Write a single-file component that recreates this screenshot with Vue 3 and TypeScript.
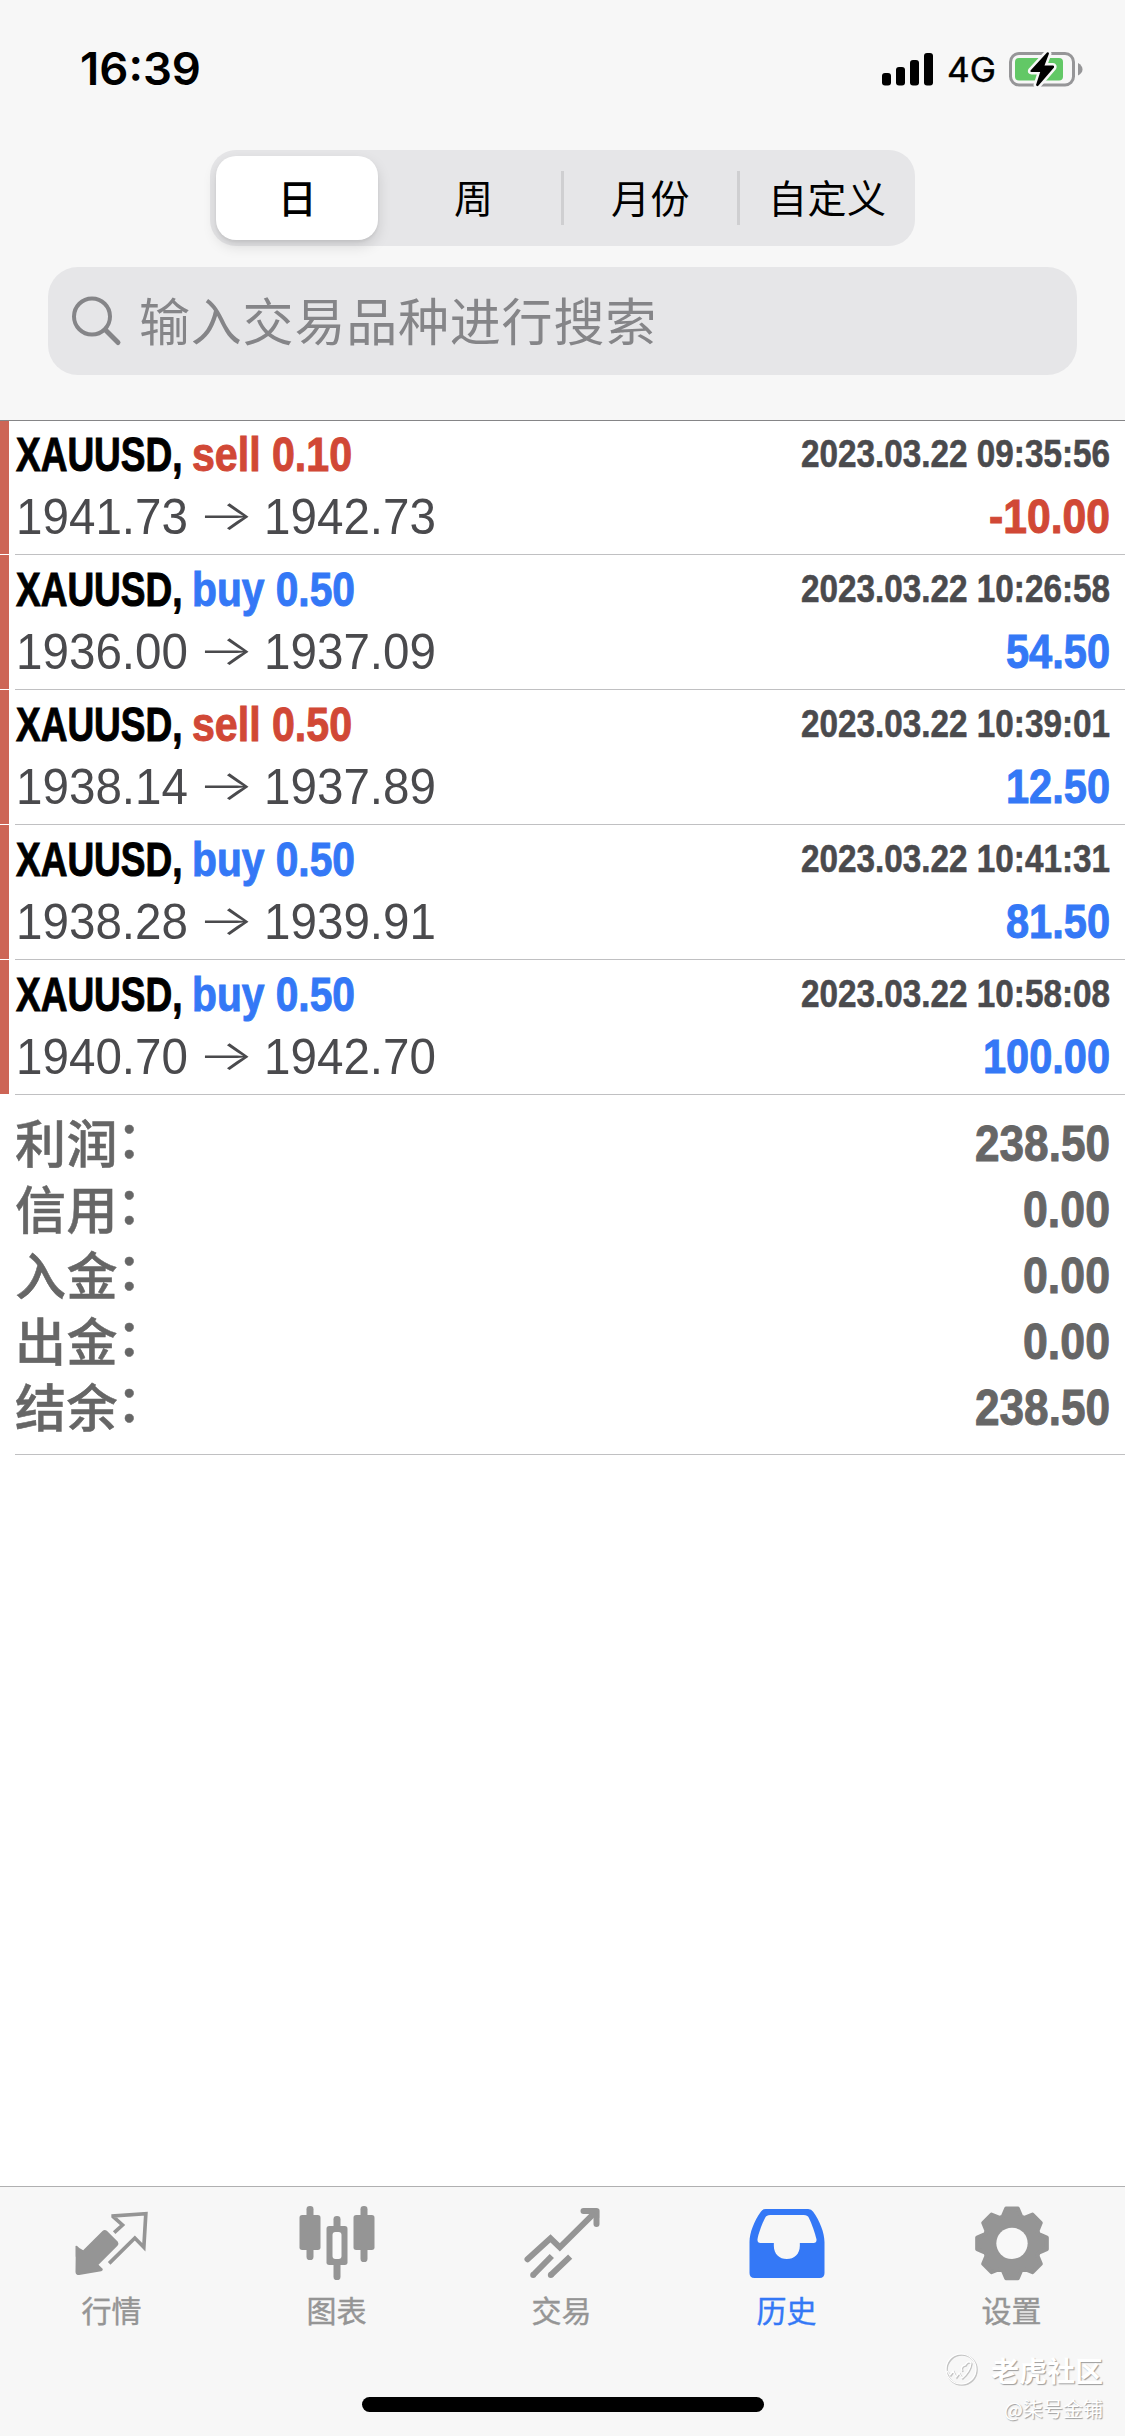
<script setup lang="ts">
import type { Directive } from 'vue'

interface Deal {
  side: 'sell' | 'buy'
  volume: string
  sideWidth: number
  open: string
  close: string
  time: string
  profit: string
  profitWidth: number
}

interface SummaryLine {
  label: string
  value: string
  width: number
}

const periods: string[] = ['日', '周', '月份', '自定义']
const activePeriod = 0

const deals: Deal[] = [
  { side: 'sell', volume: '0.10', sideWidth: 160, open: '1941.73', close: '1942.73', time: '2023.03.22 09:35:56', profit: '-10.00', profitWidth: 121 },
  { side: 'buy', volume: '0.50', sideWidth: 163, open: '1936.00', close: '1937.09', time: '2023.03.22 10:26:58', profit: '54.50', profitWidth: 104 },
  { side: 'sell', volume: '0.50', sideWidth: 160, open: '1938.14', close: '1937.89', time: '2023.03.22 10:39:01', profit: '12.50', profitWidth: 104 },
  { side: 'buy', volume: '0.50', sideWidth: 163, open: '1938.28', close: '1939.91', time: '2023.03.22 10:41:31', profit: '81.50', profitWidth: 104 },
  { side: 'buy', volume: '0.50', sideWidth: 163, open: '1940.70', close: '1942.70', time: '2023.03.22 10:58:08', profit: '100.00', profitWidth: 127 },
]

const summary: SummaryLine[] = [
  { label: '利润', value: '238.50', width: 135 },
  { label: '信用', value: '0.00', width: 87 },
  { label: '入金', value: '0.00', width: 87 },
  { label: '出金', value: '0.00', width: 87 },
  { label: '结余', value: '238.50', width: 135 },
]

// Condenses a text run horizontally so that it takes exactly the given width.
const vFit: Directive<HTMLElement, number> = {
  mounted(el, binding) {
    const natural = el.getBoundingClientRect().width
    el.style.transform = `scaleX(${binding.value / natural})`
    el.style.marginRight = `${binding.value - natural}px`
  },
}

const gearPoints: string = Array.from({ length: 8 }, (_, i) => i * 45)
  .flatMap((a): [number, number][] => [[a - 9.5, 106], [a + 9.5, 106], [a + 19, 85], [a + 26, 85]])
  .map(([deg, r]) => {
    const t = (deg * Math.PI) / 180
    return `${(634.5 + r * Math.sin(t)).toFixed(1)},${(250 - r * Math.cos(t)).toFixed(1)}`
  })
  .join(' ')
</script>

<template>
  <div class="screen">
    <header class="top">
      <div class="status">
        <span v-fit="121" class="clock fit">16:39</span>
        <div class="status-right">
          <svg class="signal" width="51" height="33" viewBox="0 0 51 33">
            <rect x="0" y="20" width="9" height="12.5" rx="3" />
            <rect x="14" y="14" width="9" height="18.5" rx="3" />
            <rect x="28" y="7" width="9" height="25.5" rx="3" />
            <rect x="42" y="0" width="9" height="32.5" rx="3" />
          </svg>
          <span v-fit="49" class="network fit">4G</span>
          <svg class="battery" width="75" height="38" viewBox="0 0 75 38">
            <rect x="1.5" y="3.5" width="63" height="31.5" rx="8.5" fill="none" stroke="#969698" stroke-width="3" />
            <path d="M69 13 Q73.5 15.5 73.5 19.5 Q73.5 23 69 25.5 Z" fill="#969698" />
            <rect x="6" y="8" width="48" height="22.5" rx="4" fill="#62c866" />
            <path d="M38 2.5 L21.5 20.5 Q21 22 22.5 22 H31.2 L27 35 Q28 37 29.5 35.5 L45 17.5 Q45.5 15.5 44 15.5 H35.5 L40 3.5 Q39.5 1.5 38 2.5 Z" fill="#000" stroke="#f7f7f7" stroke-width="5" stroke-linejoin="round" paint-order="stroke" />
          </svg>
        </div>
      </div>

      <div class="segments">
        <div v-for="(p, i) in periods" :key="p" class="segment" :class="{ active: i === activePeriod, divided: i > 1 }">
          <span>{{ p }}</span>
        </div>
      </div>

      <div class="search">
        <svg width="52" height="52" viewBox="0 0 52 52" fill="none" stroke="#858588" stroke-linecap="round">
          <circle cx="21" cy="21.5" r="18" stroke-width="4" />
          <path d="M34.5 35 L47 47.5" stroke-width="5" />
        </svg>
        <span class="placeholder">输入交易品种进行搜索</span>
      </div>
    </header>

    <main class="content">
      <article v-for="(d, i) in deals" :key="i" class="deal">
        <div class="marker"></div>
        <div class="deal-body">
          <div class="line">
            <div class="title">
              <span v-fit="166.5" class="fit">XAUUSD,</span>
              <span v-fit="d.sideWidth" class="fit" :class="d.side">{{ d.side }} {{ d.volume }}</span>
            </div>
            <span v-fit="309" class="fit time">{{ d.time }}</span>
          </div>
          <div class="line second">
            <div class="prices">
              <span v-fit="172" class="fit price">{{ d.open }}</span>
              <span class="arrow">→</span>
              <span v-fit="172" class="fit price">{{ d.close }}</span>
            </div>
            <span v-fit="d.profitWidth" class="fit profit" :class="d.profit.startsWith('-') ? 'sell' : 'buy'">{{ d.profit }}</span>
          </div>
        </div>
      </article>

      <section class="summary">
        <div v-for="s in summary" :key="s.label" class="sum-line">
          <span class="sum-label">{{ s.label }}<span class="colon">：</span></span>
          <span v-fit="s.width" class="fit sum-value">{{ s.value }}</span>
        </div>
      </section>
    </main>

    <nav class="tabs">
      <div class="tab">
        <svg viewBox="220.5 132 234 234">
          <path d="M226 258 L248 271 L306 213 Q312 207 319 212 L352 245 Q356 251 351 257 L294 314 L307 327 Q307 332 302 334 L236 345 Q225 345 225 335 Z M225 258 Q228 255 233 261 L246 272 L225 290 Z" fill="#959595" />
          <path d="M341 218 L366 195 L338 170 V168 L436 161 L430 262 L403 234 L326 310" fill="none" stroke="#959595" stroke-width="11" />
        </svg>
        <span>行情</span>
      </div>
      <div class="tab">
        <svg viewBox="895.5 132 234 234" fill="#959595">
          <rect x="918" y="138" width="21" height="162" rx="10" />
          <rect x="897" y="165" width="63" height="105" rx="8" />
          <rect x="999" y="168" width="21" height="192" rx="10" />
          <rect x="978" y="198" width="63" height="117" rx="8" />
          <rect x="996" y="216" width="27" height="81" rx="9" fill="#fafafa" />
          <rect x="1080" y="138" width="21" height="168" rx="10" />
          <rect x="1059" y="165" width="63" height="105" rx="8" />
        </svg>
        <span>图表</span>
      </div>
      <div class="tab">
        <svg viewBox="310.5 132 234 234" fill="none" stroke="#959595" stroke-width="18">
          <path d="M321 298 L390 235 L418 262 L526 155" stroke-linecap="round" />
          <path d="M489 153 H528 V192" stroke-linecap="round" stroke-linejoin="round" />
          <path d="M510 148 H536 V174 Z" fill="#959595" stroke="none" />
          <circle cx="338" cy="345" r="9" fill="#959595" stroke="none" />
          <circle cx="391" cy="345" r="9" fill="#959595" stroke="none" />
          <path d="M338 345 L394 288 M391 345 L449 290" />
        </svg>
        <span>交易</span>
      </div>
      <div class="tab current">
        <svg viewBox="985.5 132 234 234">
          <path fill-rule="evenodd" fill="#3478f6" d="M1036 147 H1163 Q1173 147 1178 155 C1198 183 1212 218 1212 246 V339 Q1212 354 1197 354 H1002 Q987 354 987 339 V246 C987 218 1001 183 1021 155 Q1026 147 1036 147 Z M1049 165 Q1038 165 1034 173 C1025 191 1014 220 1011 238 Q1010 249 1020 249 H1060 V257 C1060 282 1077 297 1099 297 C1121 297 1138 282 1138 257 V249 H1179 Q1189 249 1188 238 C1184 220 1174 191 1165 173 Q1161 165 1150 165 Z" />
        </svg>
        <span>历史</span>
      </div>
      <div class="tab">
        <svg viewBox="520.5 132 234 234">
          <polygon :points="gearPoints" fill="#959595" stroke="#959595" stroke-width="12" stroke-linejoin="round" />
          <circle cx="634.5" cy="250" r="47" fill="#f8f8f8" />
        </svg>
        <span>设置</span>
      </div>
      <div class="home"></div>
      <div class="watermark">
        <div class="brand">
          <svg width="34" height="34" viewBox="0 0 34 34" fill="none">
            <g stroke="#c4c4c4" transform="translate(1 1)">
              <circle cx="16" cy="16" r="15" stroke-width="1.6" />
              <path d="M2 18 L5 22 L8 18 L11 24 L14 20 L17 25 Q25 18 26 10 Q23 7 20 12 Q15 13 17 18" stroke-width="1.5" />
            </g>
            <g stroke="#fff">
              <circle cx="16" cy="16" r="15" stroke-width="1.2" />
              <path d="M2 18 L5 22 L8 18 L11 24 L14 20 L17 25 Q25 18 26 10 Q23 7 20 12 Q15 13 17 18" stroke-width="1.2" />
            </g>
          </svg>
          <span>老虎社区</span>
        </div>
        <div class="author">@柒号金铺</div>
      </div>
    </nav>
  </div>
</template>

<style>
body {
  margin: 0;
  background: #fff;
}
</style>

<style scoped>
.screen {
  width: 1125px;
  height: 2436px;
  display: flex;
  flex-direction: column;
  overflow: hidden;
  background: #fff;
  font-family: "Liberation Sans", "Noto Sans CJK SC", sans-serif;
}
.fit {
  display: inline-block;
  white-space: pre;
  transform-origin: 0 50%;
  flex: none;
}
.top {
  box-sizing: border-box;
  height: 421px;
  flex: none;
  background: #f7f7f7;
  border-bottom: 1px solid #858587;
  display: flex;
  flex-direction: column;
  align-items: center;
}
.status {
  box-sizing: border-box;
  width: 100%;
  height: 150px;
  padding: 39px 41px 0 80px;
  display: flex;
  justify-content: space-between;
  align-items: flex-start;
}
.clock {
  font: 600 45px/60px Inter, sans-serif;
}
.status-right {
  display: flex;
  align-items: center;
  height: 60px;
}
.network {
  font: 400 34px/60px Inter, sans-serif;
  margin-left: 14px;
  padding-top: 2px;
  -webkit-text-stroke: 0.4px #000;
}
.battery {
  margin-left: 13px;
}
.segments {
  box-sizing: border-box;
  width: 705px;
  height: 96px;
  padding: 6px 0 6px 6px;
  border-radius: 26px;
  background: #e6e6e8;
  display: flex;
  flex: none;
}
.segment {
  flex: 1;
  display: flex;
  align-items: center;
  justify-content: center;
  font: 400 39px/60px "Noto Sans CJK SC", sans-serif;
  letter-spacing: 0.5px;
  color: #000;
  position: relative;
}
.segment span {
  margin: 0 -1px 4px 0;
}
.active {
  flex: none;
  width: 162px;
  margin-right: 7px;
  background: #fff;
  border-radius: 20px;
  font-weight: 500;
  box-shadow: 0 6px 14px rgba(0, 0, 0, 0.13), 0 2px 3px rgba(0, 0, 0, 0.06);
}
.divided::before {
  content: "";
  position: absolute;
  left: -1px;
  top: 15px;
  width: 3px;
  height: 54px;
  background: #cfcfd1;
}
.search {
  box-sizing: border-box;
  width: 1029px;
  height: 108px;
  margin-top: 21px;
  padding-left: 23px;
  border-radius: 30px;
  background: #e6e6e8;
  display: flex;
  align-items: center;
  flex: none;
}
.placeholder {
  margin: 0 0 4px 16px;
  font: 400 51px/72px "Noto Sans CJK SC", sans-serif;
  letter-spacing: 0.8px;
  color: #858588;
}
.content {
  flex: 1;
}
.deal {
  height: 135px;
  display: flex;
}
.deal:first-child {
  height: 134px;
}
.marker {
  width: 9px;
  margin-bottom: 1px;
  background: #cd6556;
}
.deal-body {
  box-sizing: border-box;
  flex: 1;
  margin-left: 6px;
  padding: 0 15px 6px 0;
  border-bottom: 1px solid #c0c0c2;
  display: flex;
  flex-direction: column;
  justify-content: flex-end;
}
.line {
  display: flex;
  justify-content: space-between;
  height: 61px;
  font-size: 48.5px;
  line-height: 60px;
}
.second {
  height: 63px;
  line-height: 63px;
}
.title,
.prices {
  display: flex;
}
.title {
  padding-left: 0.5px;
  gap: 10px;
  font-weight: 700;
  -webkit-text-stroke: 1px currentColor;
}
.sell {
  color: #d14836;
}
.buy {
  color: #3478f6;
}
.time {
  font-size: 39.5px;
  line-height: 59px;
  font-weight: 700;
  color: #4a4a4d;
  -webkit-text-stroke: 0.6px currentColor;
}
.prices {
  padding-left: 1px;
  font-size: 49.5px;
  color: #4a4a4d;
}
.arrow {
  width: 76px;
  text-align: center;
  font-family: Inter, sans-serif;
  font-weight: 300;
  font-size: 42px;
  line-height: 59px;
  transform: scaleX(1.42);
}
.profit {
  font-weight: 700;
  -webkit-text-stroke: 1px currentColor;
}
.summary {
  box-sizing: border-box;
  height: 360px;
  margin-left: 15px;
  padding: 13px 15px 0 0;
  border-bottom: 1px solid #c0c0c2;
}
.sum-line {
  height: 66px;
  display: flex;
  justify-content: space-between;
  color: #666;
}
.sum-label {
  font: 500 51px/66px "Noto Sans CJK SC", sans-serif;
  letter-spacing: 0.5px;
  -webkit-text-stroke: 0.5px currentColor;
}
.colon {
  position: relative;
  top: -5px;
  left: -1.5px;
}
.sum-value {
  padding-top: 3px;
  font-weight: 700;
  font-size: 50.5px;
  line-height: 66px;
  -webkit-text-stroke: 1px currentColor;
}
.tabs {
  box-sizing: border-box;
  position: relative;
  height: 250px;
  flex: none;
  padding-top: 17px;
  border-top: 1px solid #b0b0b1;
  background: #f7f7f7;
  display: flex;
}
.tab {
  width: 225px;
  display: flex;
  flex-direction: column;
  align-items: center;
  color: #959595;
  font: 400 30px/44px "Noto Sans CJK SC", sans-serif;
}
.tab svg {
  width: 78px;
  height: 78px;
  display: block;
}
.tab span {
  margin: 5px 2px 0 0;
  -webkit-text-stroke: 0.4px currentColor;
}
.current {
  color: #3478f6;
}
.home {
  position: absolute;
  left: 362px;
  top: 210px;
  width: 402px;
  height: 15px;
  border-radius: 8px;
  background: #000;
}
.watermark {
  position: absolute;
  right: 22px;
  top: 163px;
  display: flex;
  flex-direction: column;
  align-items: flex-end;
  color: #fff;
  text-shadow: 1px 1px 1px #9c9c9c;
  font-family: "Noto Sans CJK SC", sans-serif;
}
.brand {
  display: flex;
  align-items: center;
  gap: 12px;
  font-size: 28px;
  font-weight: 700;
  line-height: 40px;
}
.author {
  margin-top: 4px;
  font-size: 20px;
  line-height: 30px;
}
</style>
